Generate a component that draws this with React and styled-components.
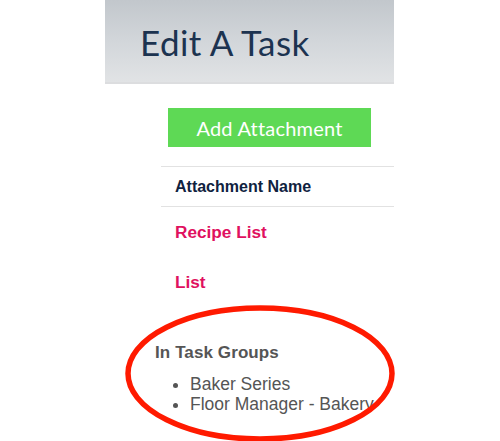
import React from "react";
import styled, { createGlobalStyle } from "styled-components";

const Global = createGlobalStyle`
  html, body { margin: 0; padding: 0; background: #fff; }
  body { width: 500px; height: 441px; overflow: hidden; position: relative; }
`;

const Page = styled.div`
  position: relative;
  width: 500px;
  height: 441px;
`;

const Column = styled.div`
  margin-left: 105px;
  width: 289px;
  display: flex;
  flex-direction: column;
`;

const Header = styled.header`
  height: 84px;
  box-sizing: border-box;
  border-bottom: 2px solid #dcdddf;
  background: linear-gradient(180deg, #c2c7cc 0%, #d2d6da 50%, #e1e3e5 100%);
  display: flex;
  align-items: center;
  padding: 2px 0 0 35px;
`;

const Title = styled.h1`
  margin: 0;
  font-family: "Lato", "Open Sans", sans-serif;
  font-weight: 400;
  font-size: 35px;
  letter-spacing: 0.4px;
  color: #1c3350;
`;

const Main = styled.main`
  padding-left: 56px;
  display: flex;
  flex-direction: column;
`;

const AddButton = styled.button`
  margin: 24px 0 0 7px;
  width: 203px;
  height: 39px;
  border: none;
  background: #5ed955;
  color: #fff;
  font-family: "Lato", "Open Sans", sans-serif;
  font-size: 20px;
  font-weight: 400;
  letter-spacing: 0.2px;
  padding: 0;
  cursor: pointer;
`;

const Table = styled.div`
  margin-top: 19px;
  display: flex;
  flex-direction: column;
  font-family: "Liberation Sans", Arial, sans-serif;
`;

const HeadRow = styled.div`
  height: 39px;
  border-top: 1.5px solid #e2e2e2;
  border-bottom: 1.5px solid #e2e2e2;
  display: flex;
  align-items: center;
  padding-left: 14px;
  font-weight: 700;
  font-size: 16px;
  color: #0f2240;
`;

const Row = styled.div`
  height: 50px;
  display: flex;
  align-items: center;
  padding-left: 14px;
  font-weight: 700;
  font-size: 17.2px;
  color: #e0115f;
`;

const Groups = styled.section`
  margin: 36px 0 0 -6px;
  font-family: "Liberation Sans", Arial, sans-serif;
  color: #555;
`;

const GroupsTitle = styled.h3`
  margin: 0;
  font-size: 17px;
  font-weight: 700;
  letter-spacing: 0.1px;
`;

const GroupList = styled.ul`
  margin: 11px 0 0;
  padding-left: 35px;
  font-size: 17.5px;
  line-height: 20px;
`;

const Circle = styled.svg`
  position: absolute;
  left: 125px;
  top: 305px;
  width: 270px;
  height: 137px;
  overflow: visible;
  pointer-events: none;
`;

export default function App() {
  return (
    <Page>
      <Global />
      <Column>
        <Header>
          <Title>Edit A Task</Title>
        </Header>
        <Main>
          <AddButton>Add Attachment</AddButton>
          <Table>
            <HeadRow>Attachment Name</HeadRow>
            <Row>Recipe List</Row>
            <Row>List</Row>
          </Table>
          <Groups>
            <GroupsTitle>In Task Groups</GroupsTitle>
            <GroupList>
              <li>Baker Series</li>
              <li>Floor Manager - Bakery</li>
            </GroupList>
          </Groups>
        </Main>
      </Column>
      <Circle viewBox="0 0 270 137">
        <ellipse cx="135" cy="68.5" rx="132" ry="65.5" fill="none" stroke="#ff1a00" strokeWidth="5.5" />
      </Circle>
    </Page>
  );
}
